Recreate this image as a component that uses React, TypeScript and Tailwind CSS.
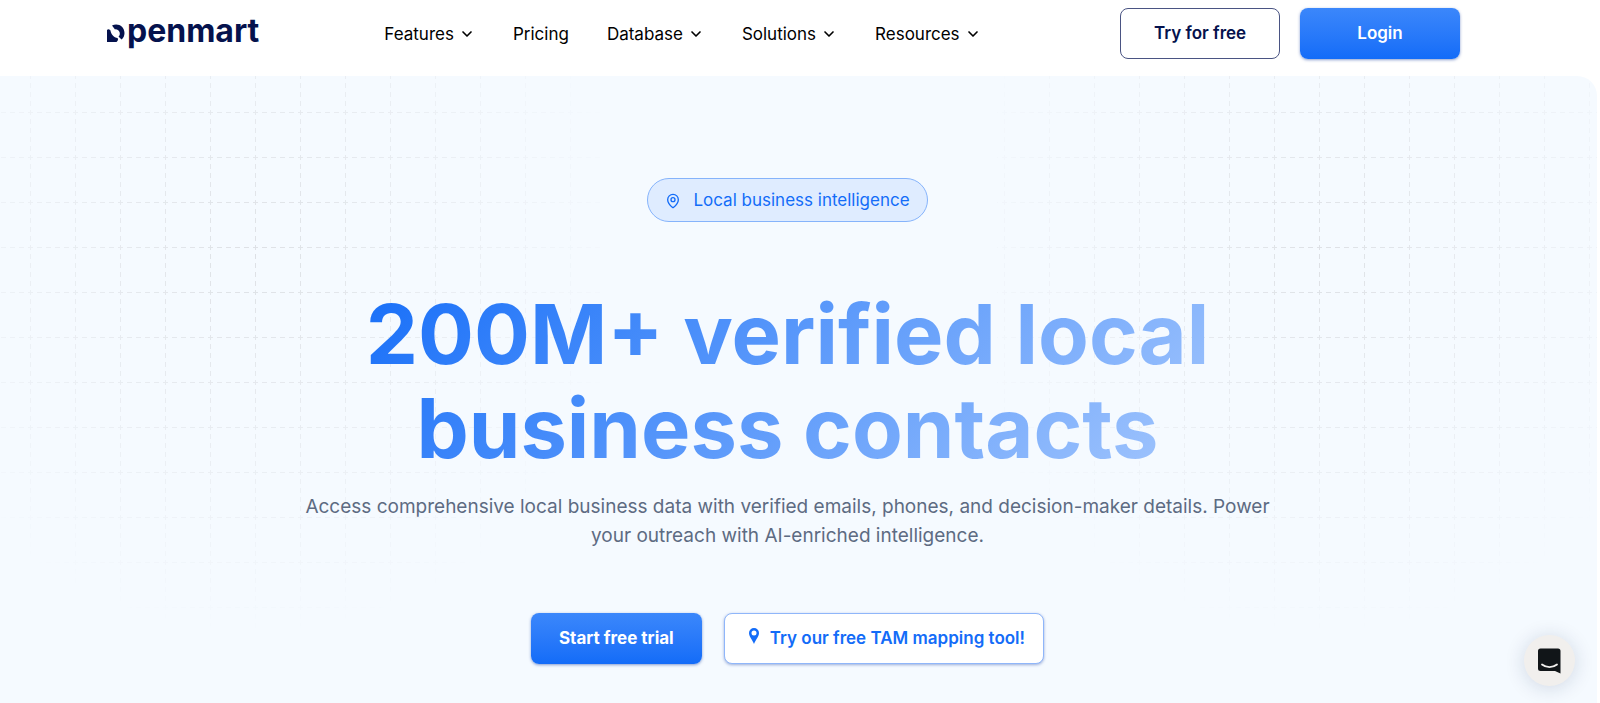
import React from "react";
import { ChevronDown, MapPin } from "lucide-react";

const NAV = [
  { label: "Features", menu: true },
  { label: "Pricing", menu: false },
  { label: "Database", menu: true },
  { label: "Solutions", menu: true },
  { label: "Resources", menu: true },
];

function Logo() {
  return (
    <a href="#home" aria-label="openmart" className="flex items-center gap-0.5 pb-1.5 text-[#05124d]">
      <svg viewBox="0 0 36 36" className="mt-1 size-[18px]" fill="currentColor" aria-hidden="true">
        <path d="M0 12 C2 10 4 10 7 13 C8 21 14 27 21 28 C23 30 22 34 19 36 H0 Z" />
        <path d="M10 3 C21 -3 35 4 35 18 C35 23 33 28 29 31 L23 25 C26 22 26 19 25 16 C23 12 19 10 16 11 Z" />
      </svg>
      <span className="text-[32px] leading-10 font-bold">penmart</span>
    </a>
  );
}

function Header() {
  return (
    <header className="flex h-[76px] items-center bg-white pr-[140px] pb-[9px] pl-[107px]">
      <Logo />
      <nav className="ml-[125px] flex items-center gap-[38px] text-black">
        {NAV.map((n) => (
          <a key={n.label} href={"#" + n.label.toLowerCase()} className="flex items-center gap-[5px] text-[17px] leading-6">
            {n.label}
            {n.menu && <ChevronDown className="size-4" strokeWidth={2.5} />}
          </a>
        ))}
      </nav>
      <div className="ml-auto flex gap-5">
        <button className="h-[51px] w-40 rounded-lg border border-[#4a5483] bg-white text-[17px] font-semibold text-[#05124d]">
          Try for free
        </button>
        <button className="h-[51px] w-40 rounded-lg bg-linear-to-b from-[#3b87fb] to-[#136cf8] text-[17px] font-semibold text-white shadow-[0_1px_3px_rgba(20,60,160,0.5)]">
          Login
        </button>
      </div>
    </header>
  );
}

function DashedGrid({ id, x, y, cx }: { id: string; x: number; y: number; cx: number }) {
  return (
    <svg className="h-[600px] w-[600px]" aria-hidden="true">
      <defs>
        <pattern id={id + "-cell"} x={x} y={y} width="45" height="45" patternUnits="userSpaceOnUse">
          <path d="M0 0.5H45" stroke="#dde0e5" strokeDasharray="5 4" strokeDashoffset="2" />
          <path d="M0.5 0V45" stroke="#dde0e5" strokeDasharray="5 4" strokeDashoffset="2" />
        </pattern>
        <radialGradient id={id + "-fade"} gradientUnits="userSpaceOnUse" cx={cx} cy="180" r="380">
          <stop offset="0" stopColor="#fff" />
          <stop offset="1" stopColor="#fff" stopOpacity="0" />
        </radialGradient>
        <mask id={id + "-mask"} maskUnits="userSpaceOnUse" x="0" y="0" width="600" height="600">
          <rect width="600" height="600" fill={"url(#" + id + "-fade)"} />
        </mask>
      </defs>
      <rect width="600" height="600" fill={"url(#" + id + "-cell)"} mask={"url(#" + id + "-mask)"} />
    </svg>
  );
}

function Hero() {
  return (
    <section className="relative mr-[3px] grow overflow-hidden rounded-tr-[20px] bg-[#f5faff]">
      <div className="absolute inset-0 flex justify-between">
        <DashedGrid id="left" x={30} y={36} cx={255} />
        <DashedGrid id="right" x={7} y={36} cx={325} />
      </div>
      <div className="relative flex flex-col items-center pt-[102px] pr-[46px] pb-9 pl-6 text-center">
        <p className="flex h-11 items-center gap-3 rounded-full border border-[#85b3fb] bg-[#dfecff] px-[17px] pt-px text-[17px] text-[#136cf8]">
          <MapPin className="size-4" strokeWidth={2} />
          Local business intelligence
        </p>
        <h1 className="mt-[65px] max-w-[920px] bg-[linear-gradient(135deg,#136cf8,#a9cafd)] bg-clip-text text-[83px] leading-[94px] font-bold text-transparent">
          200M+ verified local business contacts
        </h1>
        <p className="mt-[17px] max-w-[980px] text-[19px] leading-[29px] text-[#5d6b82]">
          Access comprehensive local business data with verified emails, phones, and decision-maker details. Power your
          outreach with AI-enriched intelligence.
        </p>
        <div className="mt-[63px] flex gap-[22px]">
          <button className="h-[51px] rounded-lg bg-linear-to-b from-[#3b87fb] to-[#136cf8] px-7 text-[17px] font-bold text-white shadow-[0_1px_3px_rgba(20,60,160,0.5)]">
            Start free trial
          </button>
          <button className="flex h-[51px] items-center gap-[11px] rounded-lg border border-[#8fb6fa] bg-white pr-[18px] pl-6 text-[17px] font-semibold text-[#136cf8] shadow-[0_1px_3px_rgba(20,60,160,0.4)]">
            <svg viewBox="0 0 10 16" className="mb-1.5 h-4 w-[10px]" fill="currentColor" aria-hidden="true">
              <path
                fillRule="evenodd"
                d="M5 0a5 5 0 0 1 5 5c0 3.500-3 6-5 11C3 11 0 8.500 0 5a5 5 0 0 1 5-5Zm0 2.500a2.500 2.500 0 1 0 0 5 2.500 2.500 0 0 0 0-5Z"
              />
            </svg>
            Try our free TAM mapping tool!
          </button>
        </div>
      </div>
    </section>
  );
}

export default function App() {
  return (
    <div className="flex min-h-screen flex-col bg-white font-['Inter',sans-serif]">
      <Header />
      <Hero />
      <button
        aria-label="Open chat"
        className="fixed right-[25px] bottom-[17px] flex size-[51px] items-center justify-center rounded-full bg-[#f1efed] shadow-[0_2px_20px_rgba(20,40,80,0.16)]"
      >
        <svg viewBox="0 0 23 26" className="h-[26px] w-[23px]" aria-hidden="true">
          <path d="M2.500 0.500H20a2.500 2.500 0 0 1 2.500 2.500V25.500L17 23H2.500A2.500 2.500 0 0 1 0 20.500V3a2.500 2.500 0 0 1 2.500-2.500Z" fill="#111518" />
          <path d="M4 16.500c4.500 3.500 10.500 3.500 15 0" fill="none" stroke="#f1efed" strokeWidth="1.800" strokeLinecap="round" />
        </svg>
      </button>
    </div>
  );
}
